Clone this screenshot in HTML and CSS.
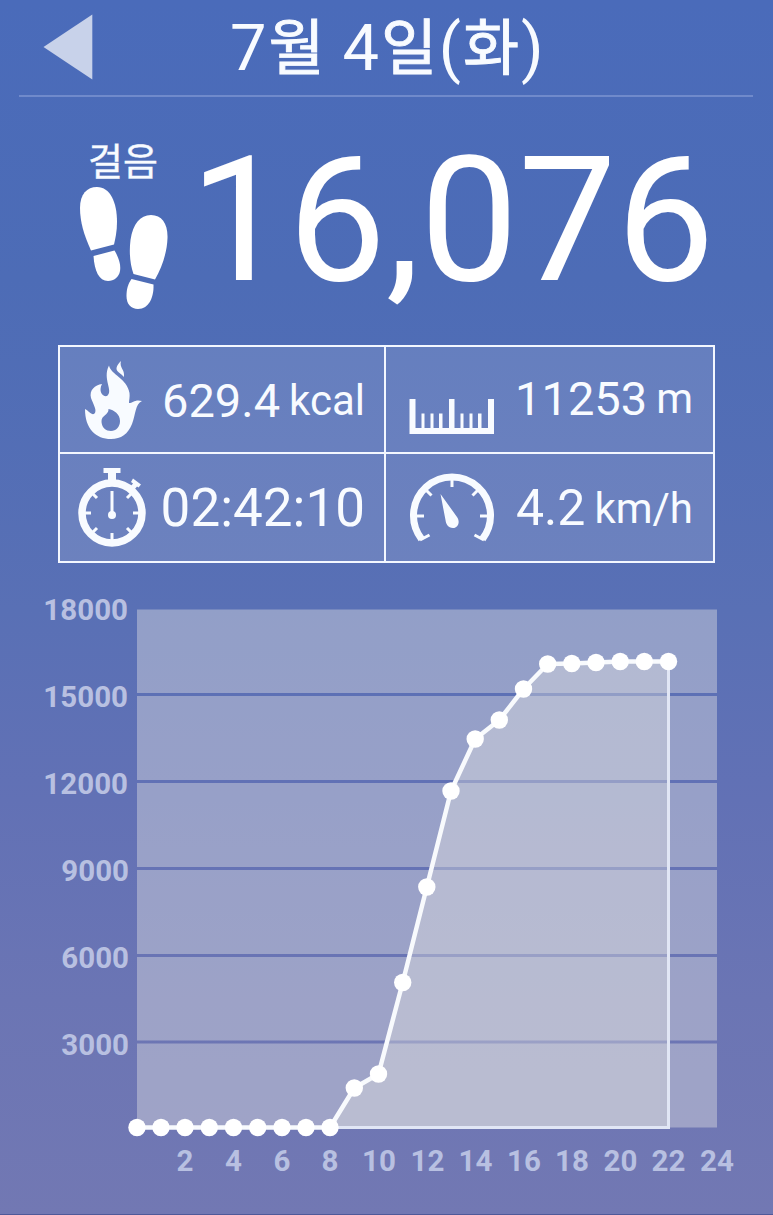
FILE: index.html
```
<!DOCTYPE html>
<html lang="ko">
<head>
<meta charset="utf-8">
<title>걸음</title>
<link rel="stylesheet" href="styles.css">
</head>
<body>
<main class="app">
  <header class="header">
    <svg class="back" width="50" height="66" viewBox="0 0 50 66"><path d="M49.3 .5V65.500L.5 33z"/></svg>
    <h1 class="title">7<span class="ko">월</span> 4<span class="ko">일</span>(<span class="ko">화</span>)</h1>
  </header>

  <section class="summary">
    <div class="steps">
      <span class="steps-label">걸음</span>
      <svg class="feet" width="90" height="124" viewBox="0 0 90 124">
        <path d="M12 64.500C5 49 1 36 1 22C1 8 8 1 18 1C31 1 38 16 38 36C38 45 36.500 52 35 58.500z"/>
        <path d="M14.500 70L35.500 64.500C40 72 42 79 41 85C40 91 35 95 29 95C20 95 15.500 85 14.500 70z"/>
        <path d="M54.500 88C51 78 50 66 51.500 54C54 38 61 29 72 29C83 29 89 38 88.500 52C88 67 83 81 76 93.500z"/>
        <path d="M52.500 93L74.500 98.500C75 111 70 123 59 123C52 123 47.500 118 47.500 110C47.500 103 49 98 52.500 93z"/>
      </svg>
    </div>
    <div class="count">16,076</div>
  </section>

  <section class="stats">
    <div class="stat">
      <svg class="icon flame" width="58" height="78" viewBox="0 0 58 78">
        <path fill-rule="evenodd" d="M24 4.500C26 14 42 17 44.500 32C45 36 44 39 44 42C48 42 50 38 57 40C50 43 51 53 47 63C43 73 36 78 26 78C11 78 0 68 0 48C4 50 6 54 9 53C13 50 8 43 6 37C4 29 10 24 17 23C13 31 18 36 22 35C29 30 17 18 24 4.500zM23.500 48C24 54 16 54 16.500 61C17 67 21 70 26 70C31 70 35 66 35 60C35 53 29 49 23.500 48z"/>
        <path d="M36 0C34 7 40 8 39 16C36 12 31 11 31.500 7C32 4 34 2 36 0z"/>
      </svg>
      <p class="value value-energy"><b class="num n48">629.4</b><span class="unit">kcal</span></p>
    </div>
    <div class="stat">
      <svg class="icon ruler" width="86" height="36" viewBox="0 0 86 36">
        <path d="M.5 0H6.500V29H12.500V14.500H15.500V29H21.500V14.500H24.500V29H30V14.500H33.500V29H40V0H45.500V29H51.500V14.500H54.500V29H60.500V14.500H63.500V29H69V14.500H72.500V29H79V0H85V35H.5z"/>
      </svg>
      <p class="value"><b class="num n48">11253</b><span class="unit">m</span></p>
    </div>
    <div class="stat">
      <svg class="icon watch" width="68" height="80" viewBox="0 0 68 80">
        <circle cx="34" cy="45" r="30" fill="none" stroke="#f8fbff" stroke-width="7.500"/>
        <path d="M25.500 0H42.500V5H38V14H30V5H25.500zM55 10.500L63 16.500L60.500 19.500L59 18.500L56.500 21.500L52.500 18.500L55 15.500L53 14z"/>
        <path class="tick" d="M34 23V45M34 65V74M5 45H13M55 45H63M14 25L19 30M54 25L49 30M14 65L19 60M54 65L49 60"/>
        <circle cx="34" cy="47" r="4"/>
      </svg>
      <p class="value value-time"><b class="num n52">02:42:10</b></p>
    </div>
    <div class="stat">
      <svg class="icon gauge" width="86" height="70" viewBox="0 0 86 70">
        <path d="M12.500 66A38.500 38.500 0 1 1 73.500 66" fill="none" stroke="#f8fbff" stroke-width="7"/>
        <path class="tick" d="M43 5V14M5 43H15M81 43H71M17 17L22.500 22.500M69 17L63.500 22.500M11 67L20.500 62M75 67L65.500 62"/>
        <path d="M31.500 21L48 44C52 50 48 55 44 55C39 55 37 51 36.500 47z"/>
      </svg>
      <p class="value value-speed"><b class="num n51">4.2</b><span class="unit">km/h</span></p>
    </div>
  </section>

  <svg class="chart" width="773" height="630" viewBox="0 585 773 630">
    <g class="panel">
      <rect x="137" y="609.500" width="580" height="83.500"/>
      <rect x="137" y="696" width="580" height="84"/>
      <rect x="137" y="783" width="580" height="84"/>
      <rect x="137" y="870" width="580" height="84"/>
      <rect x="137" y="957" width="580" height="83.500"/>
      <rect x="137" y="1043.500" width="580" height="84"/>
    </g>
    <path class="area" d="M330 1127.500L354.300 1088L378.500 1074L402.700 982.500L426.800 887L451 791L475.200 739L499.300 720L523.500 689L547.700 664L571.800 663.500L596 662.500L620.200 661.500L644.300 661.500L668.500 661.500V1127.500z"/>
    <path class="edge" d="M668.500 661.500V1127.500H330"/>
    <path class="line" d="M137 1127.500H330L354.300 1088L378.500 1074L402.700 982.500L426.800 887L451 791L475.200 739L499.300 720L523.500 689L547.700 664L571.800 663.500L596 662.500L620.200 661.500H668.500"/>
    <g class="dots">
      <circle cx="137" cy="1127.500" r="8.700"/><circle cx="161" cy="1127.500" r="8.700"/><circle cx="185" cy="1127.500" r="8.700"/><circle cx="209.300" cy="1127.500" r="8.700"/><circle cx="233.500" cy="1127.500" r="8.700"/><circle cx="257.700" cy="1127.500" r="8.700"/><circle cx="282" cy="1127.500" r="8.700"/><circle cx="306" cy="1127.500" r="8.700"/><circle cx="330" cy="1127.500" r="8.700"/>
      <circle cx="354.300" cy="1088" r="8.700"/><circle cx="378.500" cy="1074" r="8.700"/><circle cx="402.700" cy="982.500" r="8.700"/><circle cx="426.800" cy="887" r="8.700"/><circle cx="451" cy="791" r="8.700"/><circle cx="475.200" cy="739" r="8.700"/><circle cx="499.300" cy="720" r="8.700"/><circle cx="523.500" cy="689" r="8.700"/><circle cx="547.700" cy="664" r="8.700"/><circle cx="571.800" cy="663.500" r="8.700"/><circle cx="596" cy="662.500" r="8.700"/><circle cx="620.200" cy="661.500" r="8.700"/><circle cx="644.300" cy="661.500" r="8.700"/><circle cx="668.500" cy="661.500" r="8.700"/>
    </g>
    <g class="ylabels">
      <text x="128" y="620">18000</text><text x="128" y="707">15000</text><text x="128" y="794">12000</text><text x="129" y="881">9000</text><text x="129" y="968">6000</text><text x="129" y="1055">3000</text>
    </g>
    <g class="xlabels">
      <text x="185" y="1171">2</text><text x="233.500" y="1171">4</text><text x="282" y="1171">6</text><text x="330" y="1171">8</text><text x="379" y="1171">10</text><text x="427.500" y="1171">12</text><text x="475.500" y="1171">14</text><text x="524" y="1171">16</text><text x="572" y="1171">18</text><text x="620.500" y="1171">20</text><text x="668.500" y="1171">22</text><text x="717" y="1171">24</text>
    </g>
    <rect class="base" x="0" y="1214" width="773" height="1"/>
  </svg>
</main>
</body>
</html>
```
FILE: styles.css
```
* { box-sizing: border-box; margin: 0; padding: 0; }
body { width: 773px; height: 1215px; overflow: hidden; }
svg { display: block; flex: none; }
.app {
  display: flex;
  flex-direction: column;
  width: 773px;
  height: 1215px;
  color: #f8fbff;
  fill: #f8fbff;
  font-family: Roboto, "Noto Sans CJK KR", sans-serif;
  background: linear-gradient(#4a6bba 0, #4d6cb6 280px, #5970b5 610px, #6271b5 800px, #6b75b4 1000px, #7278b3 1215px);
}
.header {
  display: flex;
  height: 97px;
  margin: 0 20px 0 19px;
  padding: 14px 0 0 24px;
  border-bottom: 2px solid #708acb;
}
.back { fill: #c8d2ea; }
.title {
  margin-left: 137px;
  line-height: 68px;
  font-size: 65px;
  font-weight: 400;
  white-space: nowrap;
}
.ko {
  margin-left: 2px;
  font-size: 61px;
  letter-spacing: 1.7px;
  -webkit-text-stroke: .9px #f8fbff;
}
.summary { display: flex; height: 248px; padding: 43px 0 0 79px; }
.steps { width: 90px; }
.steps-label {
  display: block;
  height: 46px;
  margin-left: 9px;
  line-height: 44px;
  font-size: 38px;
  white-space: nowrap;
  -webkit-text-stroke: .4px #f8fbff;
}
.feet, .count { fill: #fff; color: #fff; }
.count { margin-left: 20.5px; line-height: 161px; font-size: 175px; letter-spacing: -.2px; white-space: nowrap; }
.stats {
  display: grid;
  grid-template-columns: 324px 327px;
  grid-template-rows: 105px 107px;
  gap: 2px;
  width: 657px;
  height: 218px;
  margin-left: 58px;
  border: 2px solid #f3f7ff;
  background:
    linear-gradient(#f3f7ff, #f3f7ff) 324px 0 / 2px 100% no-repeat,
    linear-gradient(#f3f7ff, #f3f7ff) 0 105px / 100% 2px no-repeat,
    rgba(255, 255, 255, .13);
}
.stat { display: flex; align-items: flex-start; padding-right: 20px; }
.flame { margin: 14px 0 0 25px; }
.ruler { margin: 52px 0 0 23px; }
.watch { margin: 14px 0 0 18px; }
.gauge { margin: 19px 0 0 23px; }
.tick { fill: none; stroke: #f8fbff; stroke-width: 3; }
.value { display: flex; align-items: baseline; margin-left: auto; line-height: 104px; white-space: nowrap; }
.value-energy { line-height: 107px; margin-right: -1px; }
.value-time { line-height: 109px; margin-right: -1px; }
.value-speed { line-height: 108px; }
.num { font-weight: 400; }
.n48 { font-size: 47px; }
.n51 { font-size: 50px; }
.n52 { font-size: 53px; }
.unit { margin-left: 9px; font-size: 42px; transform: translateY(-2px); }
.chart { margin-top: 22px; }
.panel { fill: rgba(222, 222, 226, .43); }
.area { fill: rgba(225, 225, 225, .4); }
.edge { fill: none; stroke: #e1e6f5; stroke-width: 3; }
.line { fill: none; stroke: #f8fafd; stroke-width: 4.5; stroke-linejoin: round; }
.dots { fill: #fff; }
.ylabels, .xlabels { fill: #b8c0e1; font-size: 29.5px; font-weight: 700; }
.ylabels { text-anchor: end; }
.xlabels { text-anchor: middle; }
.base { fill: #4f5999; }
```
